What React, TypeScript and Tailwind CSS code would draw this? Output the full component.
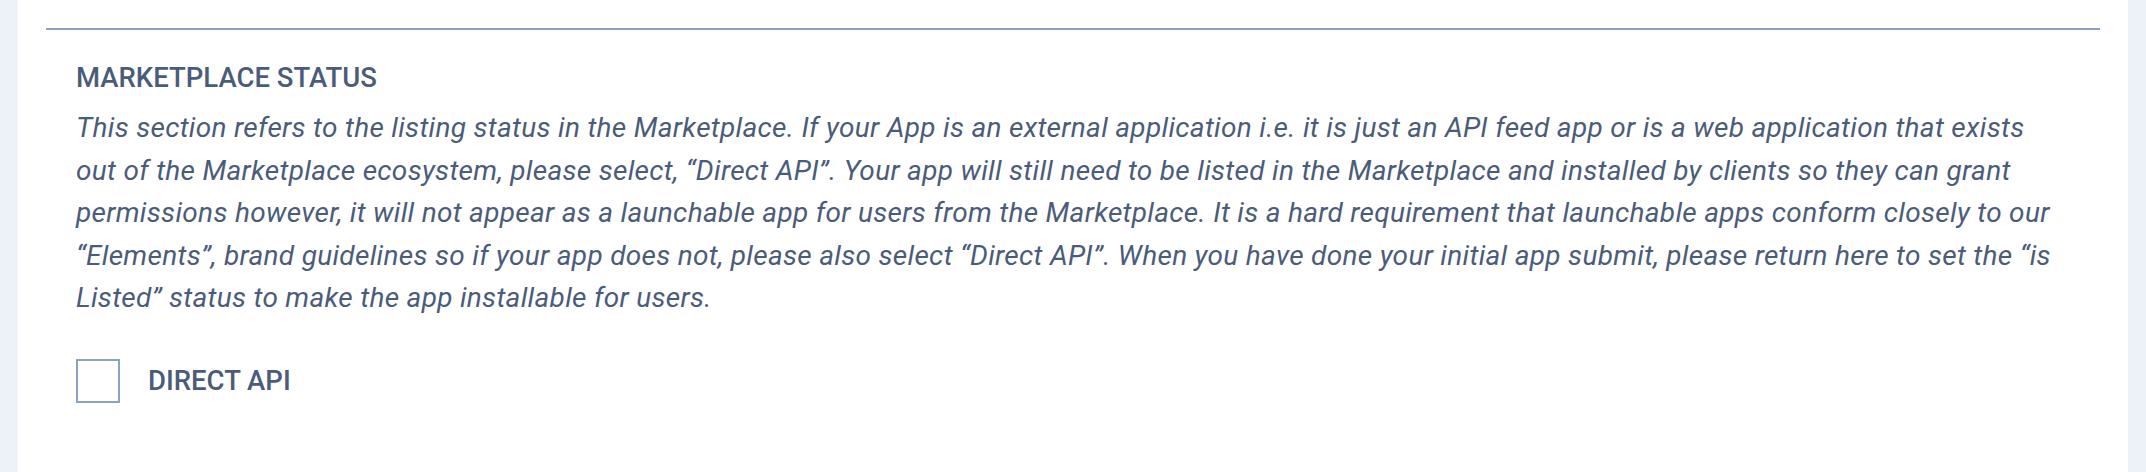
import React from "react";

export default function App() {
  const lines = [
    "This section refers to the listing status in the Marketplace. If your App is an external application i.e. it is just an API feed app or is a web application that exists",
    "out of the Marketplace ecosystem, please select, \u201cDirect API\u201d. Your app will still need to be listed in the Marketplace and installed by clients so they can grant",
    "permissions however, it will not appear as a launchable app for users from the Marketplace. It is a hard requirement that launchable apps conform closely to our",
    "\u201cElements\u201d, brand guidelines so if your app does not, please also select \u201cDirect API\u201d. When you have done your initial app submit, please return here to set the \u201cis",
    "Listed\u201d status to make the app installable for users.",
  ];
  return (
    <div className="h-[472px] w-full bg-[#edf1f8] px-[18px]" style={{ fontFamily: "Roboto, 'Noto Sans', sans-serif" }}>
      <div className="h-full bg-white px-[28px] pt-[28px]">
        <div className="h-[2px] w-full bg-[#8ba3be]" />
        <div className="pl-[30px]">
          <h2 className="mt-[30px] text-[27.5px] font-medium leading-[36px] text-[#4b5c7a]">MARKETPLACE STATUS</h2>
          <p className="mt-[11px] text-[28px] italic leading-[42.5px] tracking-[0.3px] text-[#4b5c7a] whitespace-nowrap">
            {lines.map((l, i) => (
              <React.Fragment key={i}>
                {l}
                {i < lines.length - 1 && <br />}
              </React.Fragment>
            ))}
          </p>
          <label className="mt-[39px] flex items-center gap-[28px]">
            <span className="block h-[44px] w-[44px] border-2 border-[#8ba3be] bg-white" />
            <span className="text-[27.5px] font-medium leading-[36px] text-[#4b5c7a]">DIRECT API</span>
          </label>
        </div>
      </div>
    </div>
  );
}
